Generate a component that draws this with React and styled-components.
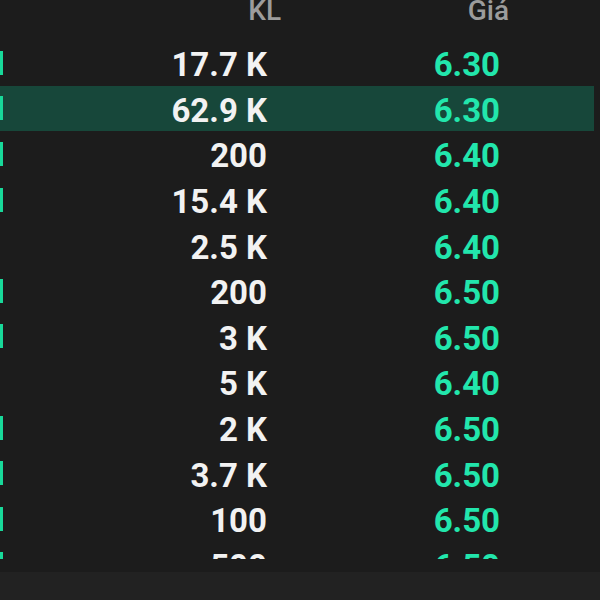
import React from "react";
import styled, { createGlobalStyle } from "styled-components";

const Global = createGlobalStyle`
  html, body { margin: 0; padding: 0; background: #1c1c1c; }
  body { font-family: Roboto, "Noto Sans", "Liberation Sans", sans-serif; }
`;

const Page = styled.div`
  width: 600px;
  height: 600px;
  display: flex;
  flex-direction: column;
  background: #1c1c1c;
  overflow: hidden;
`;

const Header = styled.div`
  height: 40px;
  display: flex;
  align-items: flex-start;
  color: #9c9c9c;
  font-size: 28px;
  line-height: 21px;
  font-weight: 500;
  flex: none;
`;

const HeadCell = styled.div`
  width: ${(p) => p.$w}px;
  text-align: right;
  flex: none;
`;

const List = styled.div`
  height: 519px;
  overflow: hidden;
  padding-right: 6px;
  flex: none;
`;

const Row = styled.div`
  height: 45.6px;
  box-sizing: border-box;
  padding-top: 4px;
  display: flex;
  align-items: center;
  background: ${(p) => (p.$active ? "#17473a" : "transparent")};
  font-size: 33px;
  font-weight: 700;
`;

const Marker = styled.div`
  width: 3px;
  height: 24px;
  margin-top: -4px;
  flex: none;
  background: ${(p) => (p.$on ? "#18d99a" : "transparent")};
`;

const Vol = styled.div`
  width: 264px;
  flex: none;
  text-align: right;
  color: #f2f2f2;
`;

const Price = styled.div`
  width: 233px;
  flex: none;
  text-align: right;
  color: #22e6ac;
`;

const Spacer = styled.div`
  flex: none;
  height: 13px;
`;

const Footer = styled.div`
  flex: 1;
  background: #222222;
`;

const rows = [
  ["17.7 K", "6.30", true],
  ["62.9 K", "6.30", true, true],
  ["200", "6.40", true],
  ["15.4 K", "6.40", true],
  ["2.5 K", "6.40", false],
  ["200", "6.50", true],
  ["3 K", "6.50", true],
  ["5 K", "6.40", false],
  ["2 K", "6.50", true],
  ["3.7 K", "6.50", true],
  ["100", "6.50", true],
  ["500", "6.50", true],
];

export default function App() {
  return (
    <Page>
      <Global />
      <Header>
        <HeadCell $w={281}>KL</HeadCell>
        <HeadCell $w={228}>Giá</HeadCell>
      </Header>
      <List>
        {rows.map(([v, p, on, active], i) => (
          <Row key={i} $active={active}>
            <Marker $on={on} />
            <Vol>{v}</Vol>
            <Price>{p}</Price>
          </Row>
        ))}
      </List>
      <Spacer />
      <Footer />
    </Page>
  );
}
